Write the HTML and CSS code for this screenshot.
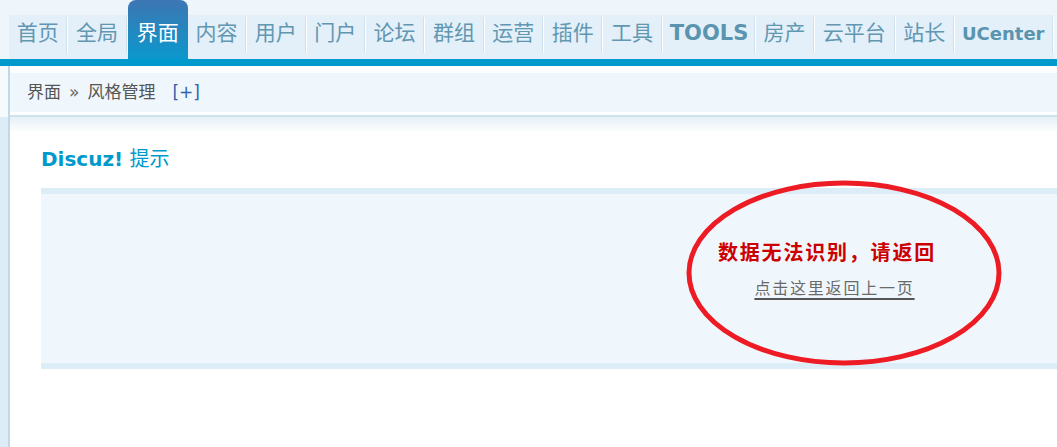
FILE: index.html
```html
<!DOCTYPE html>
<html lang="zh-CN">
<head>
<meta charset="utf-8">
<title>Discuz! 提示</title>
<link rel="stylesheet" href="styles.css">
</head>
<body>
<div class="page">
  <div class="header">
    <ul class="topmenu">
      <li><a>首页</a></li>
      <li><a>全局</a></li>
      <li class="active"><a>界面</a></li>
      <li><a>内容</a></li>
      <li><a>用户</a></li>
      <li><a>门户</a></li>
      <li><a>论坛</a></li>
      <li><a>群组</a></li>
      <li><a>运营</a></li>
      <li><a>插件</a></li>
      <li><a>工具</a></li>
      <li><a class="en tools">TOOLS</a></li>
      <li><a>房产</a></li>
      <li><a>云平台</a></li>
      <li><a>站长</a></li>
      <li><a class="en uc">UCenter</a></li>
    </ul>
  </div>
  <div class="bar"></div>
  <div class="body">
    <div class="side"></div>
    <div class="content">
      <div class="crumbwrap">
        <div class="crumb"><span>界面</span><span class="raquo">»</span><span>风格管理</span><a class="plus">[+]</a></div>
      </div>
      <div class="main">
        <h3 class="title"><b>Discuz!</b> 提示</h3>
        <div class="infobox">
          <h4 class="infotitle">数据无法识别，请返回</h4>
          <p class="marginbot"><a class="lightlink">点击这里返回上一页</a></p>
        </div>
      </div>
    </div>
  </div>
</div>
<svg class="mark" width="324" height="190" viewBox="0 0 324 190">
  <ellipse cx="160" cy="94" rx="155" ry="90" fill="none" stroke="#ed1c24" stroke-width="5"/>
</svg>
</body>
</html>
```

FILE: styles.css
```css
html, body {
  margin: 0;
  padding: 0;
}
body {
  background: #fff;
  overflow: hidden;
  font-family: "DejaVu Sans", "Noto Sans CJK SC", sans-serif;
}
.page {
  width: 1660px;
  min-height: 100vh;
  display: flex;
  flex-direction: column;
}
.header {
  height: 59px;
  background: #eef5fb;
}
.topmenu {
  display: flex;
  align-items: flex-end;
  height: 59px;
  margin: 0;
  padding: 0 0 0 9px;
  list-style: none;
}
.topmenu li {
  height: 44px;
  padding-right: 2px;
  background: linear-gradient(to right, #d2e2ed 0 1px, #ffffff 1px 2px) right 0 top 2px / 2px 36px no-repeat, #e3eff9;
}
.topmenu a {
  display: block;
  padding: 0 7.7px;
  line-height: 36px;
  font-size: 21px;
  color: #6297b1;
  text-decoration: none;
  white-space: nowrap;
}
.topmenu li.active {
  height: 59px;
  padding-right: 0;
  background: linear-gradient(#3d76b3, #0b98cc);
  border-radius: 8px 8px 0 0;
}
.topmenu li.active a {
  padding: 15px 9px 0;
  color: #fff;
}
.topmenu a.en {
  font-weight: bold;
  color: #5b94ae;
}
.topmenu a.tools {
  font-size: 21px;
  padding: 1px 5.5px 0 7px;
  line-height: 35px;
}
.topmenu a.uc {
  font-size: 18px;
  padding: 1px 7.5px 0 7px;
  line-height: 35px;
}
.bar {
  height: 7px;
  background: #0099cc;
}
.body {
  flex: 1;
  display: flex;
}
.side {
  width: 8px;
  border-right: 2px solid #c3d8e5;
  background: linear-gradient(#f5fafd 0 51px, #ddecf7 51px);
}
.content {
  flex: 1;
  display: flex;
  flex-direction: column;
}
.crumbwrap {
  padding: 7px 0 3px;
  border-bottom: 2px solid #cfe2ec;
  background: #fbfdff;
}
.crumb {
  height: 39px;
  line-height: 39px;
  padding-left: 17px;
  background: #f0f7fc;
  font-size: 17px;
  color: #555;
  display: flex;
}
.raquo {
  margin: 0 8px;
  color: #666;
}
.plus {
  margin-left: 17px;
  color: #2f64a8;
}
.main {
  flex: 1;
  padding: 27px 32px 0 31px;
  background: linear-gradient(#e5f0f7, #ffffff 16px) no-repeat;
}
.title {
  margin: 0 0 14px;
  font-size: 20px;
  line-height: 30px;
  font-weight: normal;
  color: #0099cc;
}
.title b {
  font-weight: bold;
}
.infobox {
  box-sizing: border-box;
  height: 181px;
  padding-top: 44px;
  border-top: 6px solid #ddedf8;
  border-bottom: 6px solid #ddedf8;
  background: #f0f7fc;
  text-align: center;
}
.infotitle {
  margin: 0;
  padding-right: 15px;
  font-size: 20px;
  line-height: 30px;
  letter-spacing: 1.8px;
  font-weight: bold;
  color: #cc0000;
}
.marginbot {
  margin: 6px 0 0;
  line-height: 30px;
}
.lightlink {
  font-size: 16px;
  letter-spacing: 1.8px;
  color: #6a6a6a;
  text-decoration: underline;
  text-decoration-color: #555;
  text-decoration-thickness: 2px;
  text-underline-offset: 4px;
}
.mark {
  position: absolute;
  left: 684px;
  top: 179px;
}
```
